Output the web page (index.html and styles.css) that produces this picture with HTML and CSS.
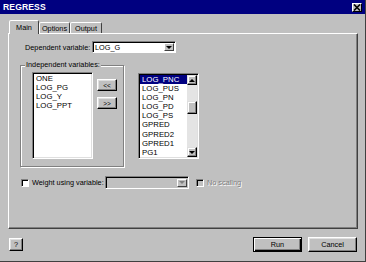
FILE: index.html
```html
<!DOCTYPE html>
<html>
<head>
<meta charset="utf-8">
<link rel="stylesheet" href="styles.css">
</head>
<body>
<div class="dialog">
  <div class="titlebar">
    <span class="title">REGRESS</span>
    <span class="close"><svg width="8" height="7" viewBox="0 0 8 7"><path d="M1 0.5 L7 6.5 M7 0.5 L1 6.5" stroke="#000" stroke-width="1.6"/></svg></span>
  </div>
  <div class="body">
    <div class="tabs">
      <div class="tab active">Main</div>
      <div class="tab t-options">Options</div>
      <div class="tab t-output">Output</div>
    </div>
    <div class="panel">
      <div class="dep-row">
        <span class="dep-label">Dependent variable:</span>
        <div class="combo">
          <span class="combo-text">LOG_G</span>
          <span class="combo-btn"><span class="arrow-down"></span></span>
        </div>
      </div>
      <div class="mid-row">
        <div class="group">
          <span class="legend">Independent variables:</span>
          <div class="list list-left">
            <div class="item">ONE</div>
            <div class="item">LOG_PG</div>
            <div class="item">LOG_Y</div>
            <div class="item">LOG_PPT</div>
          </div>
          <div class="move-btns">
            <div class="btn small">&lt;&lt;</div>
            <div class="btn small">&gt;&gt;</div>
          </div>
        </div>
        <div class="list list-right">
          <div class="items">
            <div class="item sel">LOG_PNC</div>
            <div class="item">LOG_PUS</div>
            <div class="item">LOG_PN</div>
            <div class="item">LOG_PD</div>
            <div class="item">LOG_PS</div>
            <div class="item">GPRED</div>
            <div class="item">GPRED2</div>
            <div class="item">GPRED1</div>
            <div class="item">PG1</div>
          </div>
          <div class="scrollbar">
            <div class="sb-btn"><span class="arrow-up"></span></div>
            <div class="sb-track">
              <div class="sb-thumb"></div>
            </div>
            <div class="sb-btn"><span class="arrow-down"></span></div>
          </div>
        </div>
      </div>
      <div class="weight-row">
        <span class="check"></span>
        <span class="weight-label">Weight using variable:</span>
        <div class="combo disabled">
          <span class="combo-text"></span>
          <span class="combo-btn"><span class="arrow-down grey"></span></span>
        </div>
        <span class="check disabled"></span>
        <span class="disabled-label">No scaling</span>
      </div>
    </div>
    <div class="footer">
      <div class="btn help">?</div>
      <div class="spacer"></div>
      <div class="btn wide default">Run</div>
      <div class="btn wide cancel">Cancel</div>
    </div>
  </div>
</div>
</body>
</html>
```

FILE: styles.css
```css
html, body {
  margin: 0;
  padding: 0;
  background: #c0c0c0;
}

.dialog {
  width: 366px;
  height: 262px;
  box-sizing: border-box;
  display: flex;
  flex-direction: column;
  background: #c0c0c0;
  border-right: 1px solid #404040;
  border-bottom: 1px solid #404040;
  font-family: "Liberation Sans", Arial, sans-serif;
  font-size: 7.3px;
  color: #000;
  white-space: nowrap;
}

.titlebar {
  height: 14px;
  flex: 0 0 14px;
  background: #000080;
  display: flex;
  align-items: center;
  justify-content: space-between;
  padding: 0 3px 0 3px;
}

.title {
  font-family: "Liberation Sans", Arial, sans-serif;
  font-weight: bold;
  font-size: 8.6px;
  color: #fff;
  letter-spacing: 0.1px;
}

.close {
  width: 10px;
  height: 9px;
  box-sizing: border-box;
  background: #c0c0c0;
  border: 1px solid;
  border-color: #fff #000 #000 #fff;
  display: flex;
  align-items: center;
  justify-content: center;
  margin-top: 1px;
}

.close svg {
  display: block;
}

.body {
  flex: 1;
  display: flex;
  flex-direction: column;
  padding: 6px 7px 0 8px;
}

.tabs {
  display: flex;
  align-items: flex-end;
  height: 13px;
  padding-left: 1px;
}

.tab {
  box-sizing: border-box;
  height: 11px;
  border: 1px solid;
  border-bottom: none;
  border-color: #fff #404040 transparent #fff;
  border-radius: 2px 2px 0 0;
  display: flex;
  align-items: center;
  justify-content: center;
  background: #c0c0c0;
}

.tab.active {
  width: 30px;
  height: 14px;
  margin-bottom: -1px;
  position: relative;
  z-index: 1;
  padding-bottom: 1px;
}

.t-options {
  width: 31px;
}

.t-output {
  width: 32px;
}

.panel {
  height: 196px;
  box-sizing: border-box;
  border: 1px solid;
  border-color: #fff #404040 #404040 #fff;
  box-shadow: inset -1px -1px #808080;
  display: flex;
  flex-direction: column;
  padding: 7px 0 0 0;
}

.dep-row {
  display: flex;
  align-items: center;
  height: 12px;
  padding-left: 16px;
}

.dep-label {
  flex: 0 0 67px;
}

.combo {
  width: 84px;
  height: 12px;
  box-sizing: border-box;
  background: #fff;
  border: 1px solid;
  border-color: #808080 #fff #fff #808080;
  box-shadow: inset 1px 1px #000;
  display: flex;
  align-items: center;
  padding: 1px 1px 1px 2px;
}

.combo-text {
  flex: 1;
  line-height: 9px;
}

.combo-btn {
  width: 10px;
  height: 8px;
  box-sizing: border-box;
  background: #c0c0c0;
  border: 1px solid;
  border-color: #fff #404040 #404040 #fff;
  display: flex;
  align-items: center;
  justify-content: center;
}

.arrow-down {
  width: 0;
  height: 0;
  border-left: 3px solid transparent;
  border-right: 3px solid transparent;
  border-top: 3px solid #000;
}

.arrow-down.grey {
  border-top-color: #808080;
}

.arrow-up {
  width: 0;
  height: 0;
  border-left: 3px solid transparent;
  border-right: 3px solid transparent;
  border-bottom: 3px solid #000;
}

.mid-row {
  display: flex;
  align-items: flex-start;
  margin-top: 12px;
  padding-left: 11px;
}

.group {
  position: relative;
  width: 105px;
  height: 103px;
  box-sizing: border-box;
  border: 1px solid;
  border-color: #808080 #fff #fff #808080;
  box-shadow: inset 1px 1px #fff;
  display: flex;
  align-items: flex-start;
  padding: 6px 0 0 11px;
}

.group::after {
  content: "";
  position: absolute;
  left: 0;
  top: 0;
  right: 0;
  bottom: 0;
  border-right: 1px solid #808080;
  border-bottom: 1px solid #808080;
  pointer-events: none;
}

.legend {
  position: absolute;
  top: -6px;
  left: 4px;
  background: #c0c0c0;
  padding: 0 1px;
  line-height: 10px;
}

.list {
  box-sizing: border-box;
  width: 61px;
  height: 87px;
  background: #fff;
  border: 1px solid;
  border-color: #808080 #fff #fff #808080;
  box-shadow: inset 1px 1px #000, inset -1px -1px #dfdfdf;
  padding: 1px;
}

.item {
  height: 9.1px;
  line-height: 9.1px;
  padding-left: 2px;
  font-size: 7.8px;
}

.item.sel {
  background: #000080;
  color: #fff;
}

.move-btns {
  display: flex;
  flex-direction: column;
  gap: 6px;
  margin-left: 4px;
  margin-top: 7px;
}

.btn {
  box-sizing: border-box;
  background: #c0c0c0;
  border: 1px solid;
  border-color: #fff #000 #000 #fff;
  box-shadow: inset -1px -1px #808080, inset 1px 1px #dfdfdf;
  display: flex;
  align-items: center;
  justify-content: center;
}

.btn.small {
  width: 20px;
  height: 12px;
  font-size: 6.5px;
}

.list-right {
  margin-left: 13px;
  margin-top: 8px;
  display: flex;
  height: 86px;
  padding: 1px;
}

.list-right .items {
  flex: 1;
  min-width: 0;
}

.scrollbar {
  width: 10px;
  display: flex;
  flex-direction: column;
}

.sb-btn {
  height: 10px;
  box-sizing: border-box;
  background: #c0c0c0;
  border: 1px solid;
  border-color: #dfdfdf #000 #000 #dfdfdf;
  box-shadow: inset -1px -1px #808080, inset 1px 1px #fff;
  display: flex;
  align-items: center;
  justify-content: center;
}

.sb-track {
  flex: 1;
  background-color: #e4e4e4;
  padding-top: 16px;
}

.sb-thumb {
  height: 13px;
  box-sizing: border-box;
  background: #c0c0c0;
  border: 1px solid;
  border-color: #dfdfdf #000 #000 #dfdfdf;
  box-shadow: inset -1px -1px #808080, inset 1px 1px #fff;
}

.weight-row {
  display: flex;
  align-items: center;
  height: 13px;
  margin-top: 8px;
  padding-left: 12px;
}

.check {
  width: 8px;
  height: 8px;
  box-sizing: border-box;
  background: #fff;
  border: 1px solid;
  border-color: #808080 #fff #fff #808080;
  box-shadow: inset 1px 1px #000;
}

.check.disabled {
  background: #c0c0c0;
  margin-left: 7px;
}

.weight-label {
  margin-left: 3px;
  width: 73px;
}

.combo.disabled {
  height: 13px;
  background: #c0c0c0;
}

.disabled-label {
  margin-left: 3px;
  color: #808080;
  text-shadow: 1px 1px 0 #fff;
}

.footer {
  display: flex;
  align-items: center;
  margin-top: 8px;
  height: 15px;
}

.btn.help {
  width: 14px;
  height: 13px;
  margin-left: 1px;
}

.spacer {
  flex: 1;
}

.btn.wide {
  width: 49px;
  height: 15px;
}

.btn.default {
  border-color: #000;
  box-shadow: inset 1px 1px #fff, inset -1px -1px #000, inset -2px -2px #808080;
}

.btn.cancel {
  margin-left: 6px;
  margin-right: 1px;
}
```
